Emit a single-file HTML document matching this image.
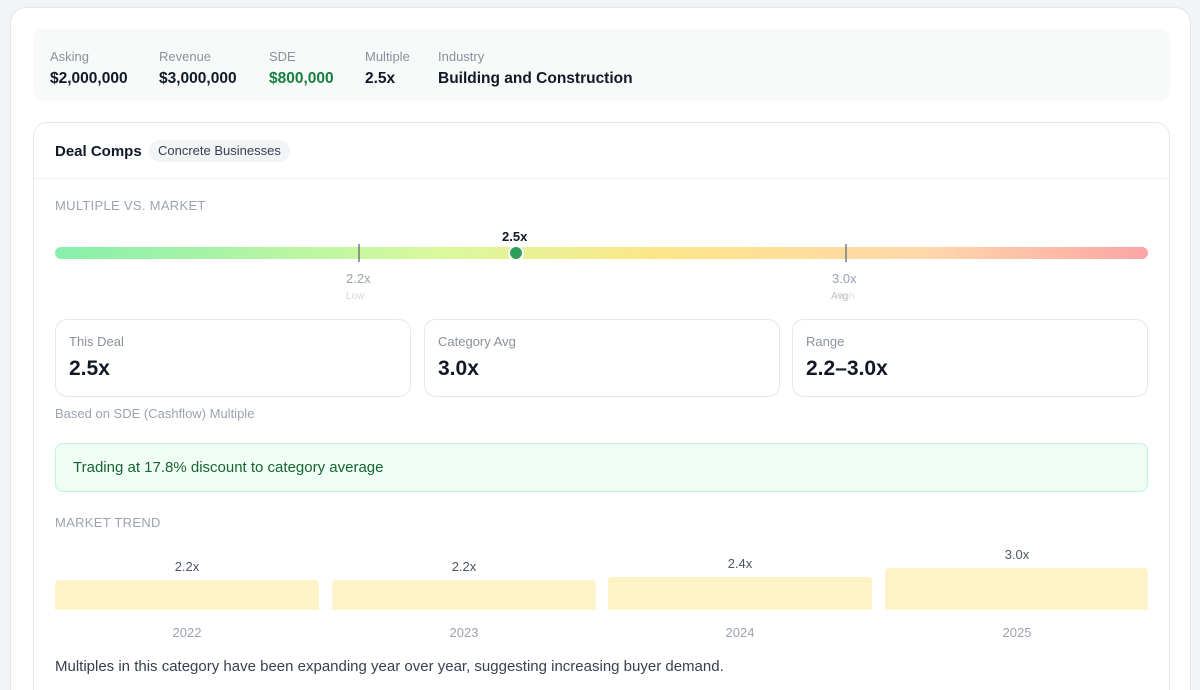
<!DOCTYPE html>
<html style="width:1200px;height:690px;overflow:hidden"><head><meta charset="utf-8"><style>
*{box-sizing:border-box;margin:0;padding:0}
body{width:1200px;height:690px;overflow:hidden;background:#f3f4f6;font-family:"Liberation Sans",sans-serif;position:relative;color:#111827}
.a{position:absolute;white-space:nowrap}
.outer{position:absolute;left:10px;top:7px;width:1181px;height:700px;background:#fff;border:1px solid #e5e7eb;border-radius:16px}
.sum{position:absolute;left:33px;top:29px;width:1137px;height:72px;background:#f8faf9;border-radius:10px}
.lab{font-size:13px;color:#8b919b}
.val{font-size:15.5px;font-weight:bold;color:#111827}
.card{position:absolute;left:33px;top:122px;width:1137px;height:600px;border:1px solid #e5e7eb;border-radius:14px;background:#fff}
.box{position:absolute;top:319px;height:78px;border:1px solid #e5e7eb;border-radius:12px;background:#fff}
.box .l{position:absolute;left:13px;top:14px;font-size:13px;color:#8b919b}
.box .v{position:absolute;left:13px;top:37px;font-size:21px;font-weight:bold;color:#111827}
.bar{position:absolute;background:#fef3c7;border-radius:4px 4px 0 0;width:264px}
.bl{font-size:13px;color:#4b5563;text-align:center;width:264px}
.yr{font-size:13px;color:#9ca3af;text-align:center;width:264px;top:625px}
</style></head><body>
<div class="outer"></div>
<div class="sum"></div>
<div class="a lab" style="left:50px;top:49px">Asking</div>
<div class="a val" style="left:50px;top:70px">$2,000,000</div>
<div class="a lab" style="left:159px;top:49px">Revenue</div>
<div class="a val" style="left:159px;top:70px">$3,000,000</div>
<div class="a lab" style="left:269px;top:49px">SDE</div>
<div class="a val" style="left:269px;top:70px;color:#15803d">$800,000</div>
<div class="a lab" style="left:365px;top:49px">Multiple</div>
<div class="a val" style="left:365px;top:70px">2.5x</div>
<div class="a lab" style="left:438px;top:49px">Industry</div>
<div class="a val" style="left:438px;top:70px">Building and Construction</div>

<div class="card"></div>
<div class="a" style="left:34px;top:178px;width:1135px;height:1px;background:#eef0f2"></div>
<div class="a" style="left:55px;top:143px;font-size:15px;font-weight:bold">Deal Comps</div>
<div class="a" style="left:149px;top:140px;height:22px;padding:0 9px;line-height:22px;border-radius:11px;background:#f3f4f6;font-size:13px;color:#374151">Concrete Businesses</div>

<div class="a" style="left:55px;top:198px;font-size:13px;color:#9ca3af;letter-spacing:0.3px">MULTIPLE VS. MARKET</div>
<div class="a" style="left:55px;top:247px;width:1093px;height:12px;border-radius:6px;background:linear-gradient(90deg,#86efac 0%,#d9f99d 35%,#fde68a 55%,#fed7aa 80%,#fca5a5 100%)"></div>
<div class="a" style="left:358px;top:244px;width:2px;height:18px;background:#6b7280;opacity:.7"></div>
<div class="a" style="left:845px;top:244px;width:2px;height:18px;background:#6b7280;opacity:.7"></div>
<div class="a" style="left:508px;top:245px;width:16px;height:16px;border-radius:50%;background:#2f9e5a;border:2px solid #fff"></div>
<div class="a" style="left:502px;top:229px;font-size:13px;font-weight:bold">2.5x</div>
<div class="a" style="left:346px;top:271px;font-size:13px;color:#9ca3af">2.2x</div>
<div class="a" style="left:346px;top:291px;font-size:10px;color:#d1d5db">Low</div>
<div class="a" style="left:832px;top:271px;font-size:13px;color:#9ca3af">3.0x</div>
<div class="a" style="left:831px;top:291px;font-size:10px;color:#c0c4ca">Avg</div>
<div class="a" style="left:834px;top:291px;font-size:10px;color:#d1d5db;opacity:.7">High</div>

<div class="box" style="left:55px;width:356px"><div class="l">This Deal</div><div class="v">2.5x</div></div>
<div class="box" style="left:424px;width:356px"><div class="l">Category Avg</div><div class="v">3.0x</div></div>
<div class="box" style="left:792px;width:356px"><div class="l">Range</div><div class="v">2.2–3.0x</div></div>
<div class="a" style="left:55px;top:406px;font-size:13px;color:#9ca3af">Based on SDE (Cashflow) Multiple</div>

<div class="a" style="left:55px;top:443px;width:1093px;height:49px;background:#f0fdf4;border:1px solid #bbf7d0;border-radius:8px"></div>
<div class="a" style="left:73px;top:459px;font-size:15px;color:#166534">Trading at 17.8% discount to category average</div>

<div class="a" style="left:55px;top:515px;font-size:13px;color:#9ca3af;letter-spacing:0.3px">MARKET TREND</div>
<div class="a bl" style="left:55px;top:559px">2.2x</div>
<div class="bar" style="left:55px;top:580px;height:30px"></div>
<div class="a bl" style="left:332px;top:559px">2.2x</div>
<div class="bar" style="left:332px;top:580px;height:30px"></div>
<div class="a bl" style="left:608px;top:556px">2.4x</div>
<div class="bar" style="left:608px;top:577px;height:33px"></div>
<div class="a bl" style="left:885px;top:547px">3.0x</div>
<div class="bar" style="left:885px;top:568px;height:42px;width:263px"></div>
<div class="a yr" style="left:55px">2022</div>
<div class="a yr" style="left:332px">2023</div>
<div class="a yr" style="left:608px">2024</div>
<div class="a yr" style="left:885px">2025</div>
<div class="a" style="left:55px;top:658px;font-size:15px;color:#374151">Multiples in this category have been expanding year over year, suggesting increasing buyer demand.</div>
</body></html>
